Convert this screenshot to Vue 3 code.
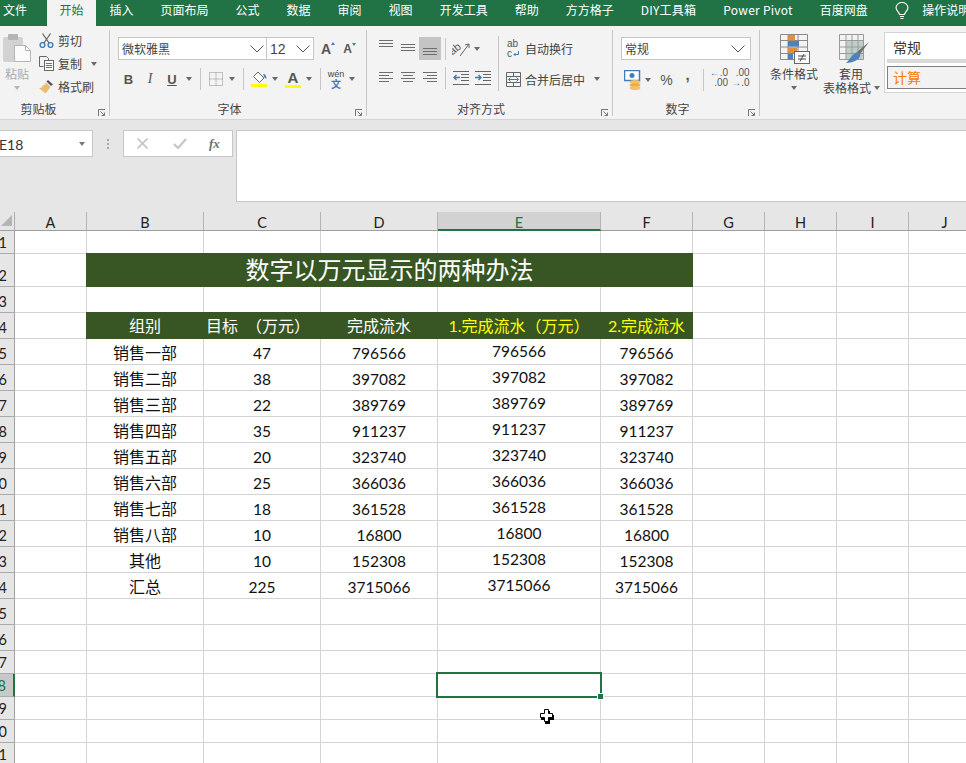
<script setup>
const tabs = ['插入', '页面布局', '公式', '数据', '审阅', '视图', '开发工具', '帮助', '方方格子', 'DIY工具箱', 'Power Pivot', '百度网盘']
const columns = ['A', 'B', 'C', 'D', 'E', 'F', 'G', 'H', 'I', 'J']

const sales = [
  ['销售一部', 47, 796566],
  ['销售二部', 38, 397082],
  ['销售三部', 22, 389769],
  ['销售四部', 35, 911237],
  ['销售五部', 20, 323740],
  ['销售六部', 25, 366036],
  ['销售七部', 18, 361528],
  ['销售八部', 10, 16800],
  ['其他', 10, 152308],
  ['汇总', 225, 3715066],
]

function blanks(count) {
  return Array.from({ length: count }, () => ({ text: '', cls: '' }))
}

function buildRow(n) {
  if (n === 2) {
    return { n, cls: 'tall', cells: [...blanks(1), { text: '数字以万元显示的两种办法', cls: 'title' }, ...blanks(4)] }
  }
  if (n === 4) {
    const heads = [
      { text: '组别', cls: 'head' },
      { text: '目标\u2002（万元）\u2002', cls: 'head' },
      { text: '完成流水', cls: 'head' },
      { text: '1.完成流水（万元）', cls: 'head gold' },
      { text: '2.完成流水', cls: 'head gold' },
    ]
    return { n, cls: '', cells: [...blanks(1), ...heads, ...blanks(4)] }
  }
  if (n >= 5 && n <= 14) {
    const [name, target, value] = sales[n - 5]
    const cells = [
      { text: name, cls: 'name' },
      { text: target, cls: 'num' },
      { text: value, cls: 'num' },
      { text: value, cls: 'num raised' },
      { text: value, cls: 'num' },
    ]
    return { n, cls: '', cells: [...blanks(1), ...cells, ...blanks(4)] }
  }
  return { n, cls: n === 1 || n >= 17 ? 'short' : '', cells: blanks(10) }
}

const rows = Array.from({ length: 21 }, (_, i) => buildRow(i + 1))
</script>

<template>
  <div class="app">
    <div class="tabs">
      <span class="tab first">文件</span>
      <span class="tab active">开始</span>
      <span v-for="t in tabs" :key="t" class="tab" :class="{ latin: /[A-Z]/.test(t) }">{{ t }}</span>
      <svg class="bulb" width="14" height="18" viewBox="0 0 14 18" fill="none" stroke="#fff" stroke-width="1.1">
        <path d="M4.5 12.5C4.5 10 1 9 1 5.8a6 5.3 0 0 1 12 0C13 9 9.500 10 9.500 12.500z" />
        <path d="M5 14.500h4M5.500 16.500h3" />
      </svg>
      <span class="tab tell">操作说明搜索</span>
    </div>

    <div class="ribbon">
      <!-- 剪贴板 -->
      <section class="group clip">
        <div class="body clip-body">
          <div class="paste">
            <svg width="28" height="28" viewBox="0 0 28 28">
              <rect x="0" y="3" width="20" height="25" rx="2" fill="#d2d2d2" />
              <rect x="5" y="0" width="10" height="6" rx="1" fill="#b5b5b5" />
              <path d="M11.500 11.500h11l5 5v11h-16z" fill="#fbfbfb" stroke="#b5b5b5" />
              <path d="M22.500 11.500v5h5" fill="none" stroke="#b5b5b5" />
            </svg>
            <span class="paste-text">粘贴</span>
            <i class="caret light"></i>
          </div>
          <div class="actions">
            <div class="action">
              <svg width="15" height="15" viewBox="0 0 15 15" fill="none">
                <path d="M3.500 0.500L10 10M11.500 0.500L5 10" stroke="#666" stroke-width="1.300" />
                <circle cx="3.500" cy="12" r="2.400" stroke="#3f7cb8" stroke-width="1.400" />
                <circle cx="11.500" cy="12" r="2.400" stroke="#3f7cb8" stroke-width="1.400" />
              </svg>
              <span>剪切</span>
            </div>
            <div class="action">
              <svg width="15" height="15" viewBox="0 0 15 15" fill="none">
                <path d="M0.500 0.500h7l2 2v2M0.500 0.500v10h4" stroke="#666" />
                <rect x="5.500" y="4.500" width="9" height="10" fill="#fff" stroke="#666" />
                <path d="M7 7.500h6M7 9.500h6M7 11.500h6" stroke="#3f7cb8" />
              </svg>
              <span>复制</span>
              <i class="caret copy-caret"></i>
            </div>
            <div class="action">
              <svg width="15" height="15" viewBox="0 0 15 15">
                <path d="M9 1l5 4.500-2 1.500-4.500-4.500z" fill="#555" />
                <path d="M7 3.500l4.500 4.500-5 6.500L0 9l3-0.500 0.500-2 2-0.500z" fill="#e8bd72" />
              </svg>
              <span>格式刷</span>
            </div>
          </div>
        </div>
        <div class="foot">
          <span class="foot-label clip-label">剪贴板</span>
          <svg class="launcher" width="7" height="7" viewBox="0 0 7 7" fill="none" stroke="#777"><path d="M0.500 7V0.500H7M2.500 2.500L6.500 6.500M3.500 6.500h3v-3" /></svg>
        </div>
      </section>
      <div class="gsep"></div>

      <!-- 字体 -->
      <section class="group font">
        <div class="body">
          <div class="font-row1">
            <div class="combo font-name">
              <span>微软雅黑</span>
              <svg class="chev" width="14" height="8" viewBox="0 0 14 8" fill="none" stroke="#555"><path d="M0.500 0.500L7 7l6.500-6.500" /></svg>
            </div>
            <div class="combo font-size">
              <span class="size-num">12</span>
              <svg class="chev" width="14" height="8" viewBox="0 0 14 8" fill="none" stroke="#555"><path d="M0.500 0.500L7 7l6.500-6.500" /></svg>
            </div>
            <span class="grow-a big">A<i class="up"></i></span>
            <span class="grow-a small">A<i class="down"></i></span>
          </div>
          <div class="font-row2">
            <b class="glyph">B</b>
            <em class="glyph ital">I</em>
            <u class="glyph">U</u>
            <i class="caret"></i>
            <i class="vsep"></i>
            <svg width="14" height="14" viewBox="0 0 14 14" fill="none" stroke="#8c8c8c" stroke-dasharray="1 1">
              <path d="M0.500 0.500h13v13h-13zM7 0.500v13M0.500 7h13" />
            </svg>
            <i class="caret"></i>
            <i class="vsep"></i>
            <span class="color-btn">
              <svg width="16" height="13" viewBox="0 0 16 13">
                <path d="M7 1l6 6-4.500 4.500L2.500 5.500z" fill="#fff" stroke="#666" />
                <path d="M12 3c2.500 0 3.500 2 3.500 5l-2-1.500z" fill="#3f7cb8" />
              </svg>
              <i class="bar"></i>
            </span>
            <i class="caret"></i>
            <span class="color-btn">
              <span class="color-a">A</span>
              <i class="bar"></i>
            </span>
            <i class="caret"></i>
            <i class="vsep"></i>
            <span class="wen"><span>wén</span><span class="wen-zi">文</span></span>
            <i class="caret"></i>
          </div>
        </div>
        <div class="foot shifted">
          <span class="foot-label">字体</span>
          <svg class="launcher" width="7" height="7" viewBox="0 0 7 7" fill="none" stroke="#777"><path d="M0.500 7V0.500H7M2.500 2.500L6.500 6.500M3.500 6.500h3v-3" /></svg>
        </div>
      </section>
      <div class="gsep"></div>

      <!-- 对齐方式 -->
      <section class="group align">
        <div class="body">
          <div class="align-row1">
            <svg class="lines at-top" width="14" height="8" viewBox="0 0 14 8"><path d="M0 0.500h14M0 3.500h14M0 6.500h14" /></svg>
            <svg class="lines at-mid" width="14" height="8" viewBox="0 0 14 8"><path d="M0 0.500h14M0 3.500h14M0 6.500h14" /></svg>
            <span class="picked"><svg class="lines" width="14" height="8" viewBox="0 0 14 8"><path d="M0 0.500h14M0 3.500h14M0 6.500h14" /></svg></span>
            <i class="vsep"></i>
            <svg width="18" height="16" viewBox="0 0 18 16" fill="none">
              <text x="0" y="14" font-size="11" font-family="Liberation Sans" fill="#555" transform="rotate(-38 1 14)">ab</text>
              <path d="M8 15L17 3M17 3l-4 1M17 3v4" stroke="#666" />
            </svg>
            <i class="caret"></i>
            <i class="vsep long-sep"></i>
            <span class="wrap-btn">
              <span class="wrap-icon">ab<br />c<svg width="6" height="6" viewBox="0 0 6 6" fill="none" stroke="#3f7cb8"><path d="M5.500 0v3.500H1M2.500 2L1 3.500 2.500 5" /></svg></span>
              自动换行
            </span>
          </div>
          <div class="align-row2">
            <svg class="lines" width="14" height="12" viewBox="0 0 14 12"><path d="M0 0.500h14M0 3.500h10M0 6.500h14M0 9.500h10" /></svg>
            <svg class="lines" width="14" height="12" viewBox="0 0 14 12"><path d="M0 0.500h14M2 3.500h10M0 6.500h14M2 9.500h10" /></svg>
            <svg class="lines" width="14" height="12" viewBox="0 0 14 12"><path d="M0 0.500h14M4 3.500h10M0 6.500h14M4 9.500h10" /></svg>
            <i class="vsep"></i>
            <svg width="16" height="14" viewBox="0 0 16 14" fill="none">
              <path d="M0 0.500h16M8 3.500h8M8 6.500h8M8 9.500h8M0 13.500h16" stroke="#666" />
              <path d="M7 6.500H1M3.500 4L1 6.500 3.500 9" stroke="#3f7cb8" stroke-width="1.500" />
            </svg>
            <svg width="16" height="14" viewBox="0 0 16 14" fill="none">
              <path d="M0 0.500h16M8 3.500h8M8 6.500h8M8 9.500h8M0 13.500h16" stroke="#666" />
              <path d="M0 6.500h6M3.500 4L6 6.500 3.500 9" stroke="#3f7cb8" stroke-width="1.500" />
            </svg>
            <span></span>
            <span class="wrap-btn merge">
              <svg width="15" height="15" viewBox="0 0 15 15" fill="none">
                <path d="M0.500 0.500h14v14h-14zM0.500 4.500h14M0.500 10.500h14M7.500 0.500v4M7.500 10.500v4" stroke="#666" />
                <path d="M2.500 7.500h10M4.500 5.500l-2 2 2 2M10.500 5.500l2 2-2 2" stroke="#3f7cb8" />
              </svg>
              <span class="merge-text">合并后居中</span>
              <i class="caret merge-caret"></i>
            </span>
          </div>
        </div>
        <div class="foot shifted">
          <span class="foot-label">对齐方式</span>
          <svg class="launcher" width="7" height="7" viewBox="0 0 7 7" fill="none" stroke="#777"><path d="M0.500 7V0.500H7M2.500 2.500L6.500 6.500M3.500 6.500h3v-3" /></svg>
        </div>
      </section>
      <div class="gsep"></div>

      <!-- 数字 -->
      <section class="group number">
        <div class="body">
          <div class="combo num-format">
            <span>常规</span>
            <svg class="chev" width="14" height="8" viewBox="0 0 14 8" fill="none" stroke="#555"><path d="M0.500 0.500L7 7l6.500-6.500" /></svg>
          </div>
          <div class="num-row">
            <svg width="17" height="20" viewBox="0 0 17 20">
              <rect x="0.500" y="0.500" width="15" height="10" fill="#fff" stroke="#3f7cb8" stroke-width="1.500" />
              <circle cx="8" cy="5.500" r="2.500" fill="#3f7cb8" />
              <ellipse cx="11" cy="12" rx="5.500" ry="2" fill="#f2c26a" />
              <ellipse cx="11" cy="15" rx="5.500" ry="2" fill="#eeae45" />
              <ellipse cx="11" cy="18" rx="5.500" ry="2" fill="#f2c26a" />
            </svg>
            <i class="caret"></i>
            <span class="pct">%</span>
            <span class="comma">,</span>
            <i class="vsep"></i>
            <span class="dec"><span><b class="arr">←</b>.0</span><span>.00</span></span>
            <span class="dec"><span>.00</span><span><b class="arr">→</b>.0</span></span>
          </div>
        </div>
        <div class="foot shifted">
          <span class="foot-label">数字</span>
          <svg class="launcher" width="7" height="7" viewBox="0 0 7 7" fill="none" stroke="#777"><path d="M0.500 7V0.500H7M2.500 2.500L6.500 6.500M3.500 6.500h3v-3" /></svg>
        </div>
      </section>
      <div class="gsep"></div>

      <!-- 样式 -->
      <section class="styles">
        <div class="big-btn cond">
          <svg class="cond-icon" width="30" height="30" viewBox="0 0 30 30" fill="none">
            <path d="M0.500 0.500h27v25h-27zM0.500 6.500h27M0.500 13h27M0.500 19.500h27M8 0.500v25M18 0.500v25" stroke="#8a8a8a" />
            <rect x="8" y="1" width="7" height="5.500" fill="#e08f3f" />
            <rect x="8" y="7" width="11" height="5.500" fill="#4f81bd" />
            <rect x="8" y="13.500" width="9" height="5.500" fill="#e08f3f" />
            <rect x="8" y="20" width="5" height="5.500" fill="#4f81bd" />
            <rect x="14.500" y="17.500" width="15" height="12" fill="#fff" stroke="#666" />
            <path d="M18 22h8M18 25h8M24 20l-4 7.500" stroke="#444" />
          </svg>
          <span class="big-text">条件格式</span>
          <i class="caret big-caret"></i>
        </div>
        <div class="big-btn table">
          <svg class="table-icon" width="30" height="30" viewBox="0 0 30 30" fill="none">
            <rect x="7" y="6" width="17" height="20" fill="#bcd0c8" />
            <path d="M0.500 0.500h24v25h-24zM0.500 6.500h24M0.500 13h24M0.500 19.500h24M7 0.500v25M13 0.500v25M19 0.500v25" stroke="#9a9a9a" />
            <path d="M30 8L21 20l-3-2z" fill="#6e6e6e" />
            <path d="M18 18l3.500 2.500C21 25 15 29 7 29c3-2 4-7 11-11z" fill="#4f81bd" />
          </svg>
          <span class="big-text">套用</span>
          <span class="big-text second">表格格式<i class="caret table-caret"></i></span>
        </div>
        <div class="gallery">
          <div class="style-normal">常规</div>
          <div class="style-calc">计算</div>
        </div>
      </section>
    </div>

    <div class="formula-bar">
      <div class="name-box">
        <span>E18</span>
        <i class="caret name-caret"></i>
      </div>
      <div class="grip"><i></i><i></i><i></i></div>
      <div class="fx-box">
        <svg width="11" height="11" viewBox="0 0 11 11" fill="none" stroke="#c6c6c6" stroke-width="1.600"><path d="M0.500 0.500l10 10M10.500 0.500l-10 10" /></svg>
        <svg width="14" height="11" viewBox="0 0 14 11" fill="none" stroke="#c6c6c6" stroke-width="2.200"><path d="M1 6l4 4 8-9" /></svg>
        <span class="fx">fx</span>
      </div>
      <div class="formula-input"></div>
    </div>

    <div class="sheet">
      <div class="col-heads">
        <div class="corner"><svg width="11" height="11" viewBox="0 0 11 11"><path d="M11 0v11H0z" fill="#b4b4b4" /></svg></div>
        <div v-for="c in columns" :key="c" class="col-head" :class="{ active: c === 'E' }">{{ c }}</div>
      </div>
      <div v-for="r in rows" :key="r.n" class="row" :class="r.cls">
        <div class="row-head" :class="{ active: r.n === 18 }">{{ r.n }}</div>
        <div v-for="(c, i) in r.cells" :key="i" class="cell" :class="c.cls">{{ c.text }}</div>
      </div>
      <div class="selection"><i class="handle"></i></div>
      <svg class="pointer" width="16" height="16" viewBox="0 0 16 16">
        <path d="M6 2h5v4h4v5h-4v4H6v-4H2V6h4z" fill="#000" />
        <path d="M5.500 0.500h4v4h4v4h-4v4h-4v-4h-4v-4h4z" fill="#fff" stroke="#000" />
      </svg>
    </div>
  </div>
</template>

<style scoped>
.app {
  position: relative;
  width: 966px;
  height: 763px;
  overflow: hidden;
  background: #fff;
  font-family: "Noto Sans CJK SC", "Liberation Sans", sans-serif;
  font-size: 12px;
  color: #444;
  text-spacing-trim: space-all;
}
i { font-style: normal; display: block; }

/* tabs */
.tabs {
  display: flex;
  align-items: flex-start;
  height: 26px;
  background: #217346;
  color: #fff;
  white-space: nowrap;
}
.tab {
  padding: 0 13.5px;
  height: 26px;
  line-height: 20px;
  flex: none;
}
.tab.first { padding: 0 20px 0 3px; }
.tab.active { background: #f3f3f3; color: #217346; padding: 0 12.5px; }
.tab.latin { letter-spacing: 0.25px; }
.bulb { margin: 2px 0 0 14px; flex: none; }
.tab.tell { padding-left: 13px; }

/* ribbon */
.ribbon {
  display: flex;
  height: 94px;
  background: #f3f3f3;
  border-bottom: 1px solid #d4d4d4;
  box-sizing: border-box;
}
.group { display: flex; flex-direction: column; flex: none; }
.gsep { width: 1px; height: 86px; margin-top: 4px; background: #c6c6c6; flex: none; }
.clip { width: 109px; }
.font { width: 256px; }
.align { width: 245px; }
.number { width: 146px; }
.body { height: 76px; flex: none; }
.foot { display: flex; height: 14px; align-items: center; line-height: 14px; }
.foot.shifted { margin-left: -8px; }
.foot-label { flex: 1; text-align: center; }
.clip-label { padding-right: 15px; }
.launcher { flex: none; margin: 6px 4px 0 6px; }

.caret {
  width: 0;
  height: 0;
  border-left: 3.5px solid transparent;
  border-right: 3.5px solid transparent;
  border-top: 4px solid #6a6a6a;
}
.caret.light { border-top-color: #b5b5b5; }
.vsep { width: 1px; height: 22px; background: #c6c6c6; }
.chev { margin-left: auto; flex: none; }

/* clipboard */
.clip-body { display: flex; }
.paste {
  display: flex;
  flex-direction: column;
  align-items: center;
  width: 28px;
  margin: 8px 0 0 3px;
}
.paste-text { color: #aaa; margin-top: 5px; line-height: 14px; }
.paste .caret { margin-top: 5px; }
.actions { margin: 3px 0 0 8px; }
.action { display: flex; align-items: center; height: 23px; white-space: nowrap; }
.action span { margin-left: 4px; }
.copy-caret { margin-left: 9px; }

/* font */
.font { padding-left: 8px; box-sizing: border-box; }
.font-row1 { display: flex; align-items: center; margin-top: 11px; height: 23px; }
.combo {
  display: flex;
  align-items: center;
  height: 23px;
  box-sizing: border-box;
  background: #fff;
  border: 1px solid #c6c6c6;
  padding: 0 3px;
}
.font-name { width: 149px; padding-right: 2px; }
.font-size { width: 47px; margin-left: 0; border-left: 0; }
.size-num { font-family: "Liberation Sans", sans-serif; font-size: 14px; }
.grow-a {
  position: relative;
  font-family: "Liberation Sans", sans-serif;
  color: #555;
  font-weight: 700;
  flex: none;
}
.grow-a.big { font-size: 14px; margin-left: 7px; }
.grow-a.small { font-size: 12px; margin-left: 12px; }
.grow-a .up, .grow-a .down {
  position: absolute;
  top: 1px;
  right: -4px;
  border-left: 2.5px solid transparent;
  border-right: 2.500px solid transparent;
}
.grow-a .up { border-bottom: 3px solid #3f7cb8; }
.grow-a .down { border-top: 3px solid #3f7cb8; }
.font-row2 {
  display: grid;
  grid-template-columns: 21px 22px 22px 12px 10px 21px 12px 10px 22px 10px 26px 6px 16px 16px 16px;
  justify-items: center;
  align-items: center;
  height: 22px;
  margin-top: 8px;
}
.glyph { font: 700 13px "Liberation Sans", sans-serif; color: #555; }
.glyph.ital { font: italic 400 14px "Liberation Serif", serif; }
.color-btn { display: flex; flex-direction: column; align-items: center; width: 16px; }
.bar { width: 16px; height: 3px; background: #ffff00; margin-top: 0; }
.color-a { font: 700 15px/14px "Liberation Sans", sans-serif; color: #555; }
.wen {
  display: flex;
  flex-direction: column;
  align-items: center;
  font: 9px/10px "Liberation Sans", sans-serif;
  white-space: nowrap;
}
.wen-zi { color: #3f7cb8; font: 700 10px/10px "Noto Sans CJK SC", sans-serif; }

/* alignment */
.align { padding-left: 8px; box-sizing: border-box; }
.lines { fill: none; stroke: #6d6d6d; }
.lines.at-top { margin-bottom: 10px; }
.lines.at-mid { margin-bottom: 2px; }
.align-row1, .align-row2 { display: grid; justify-items: center; align-items: center; }
.align-row1 {
  grid-template-columns: 22px 22px 22px 8px 24px 8px 34px auto;
  grid-template-rows: 23px;
  height: 23px;
  margin-top: 11px;
}
.align-row2 {
  grid-template-columns: 22px 22px 22px 8px 23px 22px 8px auto;
  grid-template-rows: 22px;
  height: 22px;
  margin-top: 7px;
}
.picked {
  display: flex;
  justify-content: center;
  align-items: flex-end;
  width: 22px;
  height: 23px;
  padding-bottom: 4px;
  box-sizing: border-box;
  background: #c4c4c4;
}
.long-sep { height: 55px; align-self: start; margin-top: -1px; }
.wrap-btn { display: flex; align-items: center; white-space: nowrap; justify-self: start; margin-left: -8px; font-size: 12px; }
.wrap-icon {
  width: 18px;
  font: 10px/10px "Liberation Sans", sans-serif;
  color: #555;
}
.wrap-icon svg { margin-left: 1px; }
.merge { margin-left: 4px; margin-top: 2px; }
.merge-text { margin-left: 4px; }
.merge-caret { margin-left: 9px; }

/* number */
.number { padding-left: 8px; box-sizing: border-box; }
.num-format { width: 130px; margin-top: 11px; padding-right: 5px; }
.num-row {
  display: grid;
  grid-template-columns: 22px 10px 27px 15px 16px 16px 27px;
  justify-items: center;
  align-items: center;
  height: 22px;
  margin-top: 9px;
}
.pct { font: 14px "Liberation Sans", sans-serif; color: #555; }
.comma { font: 700 15px/10px "Liberation Sans", sans-serif; color: #555; margin-top: -10px; }
.dec {
  display: flex;
  flex-direction: column;
  align-items: flex-end;
  font: 10px/10px "Liberation Sans", sans-serif;
  color: #555;
  margin-top: -4px;
}
.arr { color: #3f7cb8; font-weight: 700; }

/* styles */
.styles { display: flex; flex: 1; min-width: 0; }
.big-btn {
  display: flex;
  flex-direction: column;
  align-items: center;
  flex: none;
  padding-top: 8px;
  box-sizing: border-box;
}
.big-btn.cond { width: 58px; margin-left: 5px; }
.big-btn.table { width: 56px; }
.cond-icon { margin-left: 2px; }
.table-icon { margin-left: 5px; }
.big-text { line-height: 14px; margin-top: 3px; white-space: nowrap; }
.big-caret { margin-top: 5px; }
.second { display: flex; align-items: center; align-self: flex-start; margin-top: 0; }
.table-caret { margin-left: 3px; }
.gallery {
  flex: none;
  width: 100px;
  height: 61px;
  margin: 6px 0 0 5px;
  padding: 3px 0 0 2px;
  box-sizing: border-box;
  background: #fff;
  border: 1px solid #d4d4d4;
}
.style-normal {
  height: 23px;
  line-height: 23px;
  padding-left: 6px;
  font-size: 14px;
  color: #333;
  background: #fff;
  box-shadow: 0 4px 0 #d9d9d9;
}
.style-calc {
  height: 23px;
  line-height: 20px;
  margin-top: 7px;
  padding-left: 5px;
  box-sizing: border-box;
  font-size: 14px;
  color: #fa7d00;
  background: #f2f2f2;
  border: 1px solid #7f7f7f;
}

/* formula bar */
.formula-bar {
  display: flex;
  align-items: flex-start;
  height: 92px;
  padding-top: 10px;
  box-sizing: border-box;
  background: #e6e6e6;
}
.name-box, .fx-box {
  display: flex;
  align-items: center;
  height: 27px;
  box-sizing: border-box;
  background: #fff;
  border: 1px solid #c6c6c6;
  flex: none;
}
.name-box { width: 94px; margin-left: -1px; border-left: 0; }
.name-box span { font: 14px "Lato", "Liberation Sans", sans-serif; color: #333; margin: 2px 0 0 0; }
.name-caret { margin-left: auto; margin-right: 7px; border-top-color: #777; }
.grip { display: flex; flex-direction: column; gap: 2px; margin: 9px 14px 0 14px; flex: none; }
.grip i { width: 2px; height: 2px; background: #a8a8a8; }
.fx-box { width: 110px; padding-left: 13px; }
.fx-box svg + svg { margin-left: 25px; }
.fx {
  margin-left: 22px;
  font: italic 700 13px "Liberation Serif", serif;
  color: #6f6f6f;
}
.formula-input {
  flex: 1;
  height: 72px;
  margin-left: 3px;
  box-sizing: border-box;
  background: #fff;
  border: 1px solid #c6c6c6;
  border-right: 0;
}

/* sheet */
.sheet { position: relative; }
.col-heads, .row {
  display: grid;
  grid-template-columns: 15px 72px 117px 117px 117px 163px 92px 72px 72px 72px 72px;
}
.col-heads { height: 19px; background: #e6e6e6; }
.corner {
  display: flex;
  align-items: flex-end;
  padding: 0 0 4px 1px;
  box-sizing: border-box;
  border-right: 1px solid #ababab;
  border-bottom: 1px solid #9f9f9f;
}
.col-head {
  text-align: center;
  font: 14.500px/21px "Lato", "Liberation Sans", sans-serif;
  color: #222;
  border-right: 1px solid #b4b4b4;
  border-bottom: 1px solid #9f9f9f;
  box-sizing: border-box;
  overflow: hidden;
}
.col-head.active {
  background: #d2d2d2;
  color: #217346;
  border-bottom: 2px solid #217346;
}
.row { height: 26px; grid-template-rows: 26px; }
.row.short { height: 23px; grid-template-rows: 23px; }
.row.tall { height: 33px; grid-template-rows: 33px; }
.row-head {
  display: flex;
  justify-content: flex-end;
  align-items: flex-end;
  overflow: hidden;
  padding-right: 7px;
  background: #e6e6e6;
  border-right: 1px solid #9f9f9f;
  border-bottom: 1px solid #ababab;
  box-sizing: border-box;
  font: 14.500px/20px "Lato", "Liberation Sans", sans-serif;
  color: #222;
}
.row-head.active {
  background: #c8c8c8;
  color: #217346;
  border-right: 2px solid #217346;
}
.cell {
  display: flex;
  align-items: center;
  justify-content: center;
  white-space: nowrap;
  border-right: 1px solid #d4d4d4;
  border-bottom: 1px solid #d4d4d4;
  box-sizing: border-box;
  font-family: "Lato", "Noto Sans CJK SC", sans-serif;
  font-size: 16px;
  color: #111;
}
.cell.name { font-family: "Noto Sans CJK SC", sans-serif; }
.cell.num { padding-top: 2px; font-size: 15.5px; }
.cell.raised { padding: 0 0 2px; }
.cell.title, .cell.head {
  position: relative;
  margin: -1px 0 0 -1px;
  border: 0;
  background: #375623;
  color: #fff;
}
.cell.title {
  grid-column: span 5;
  padding-bottom: 3px;
  line-height: 28px;
  font-size: 24px;
  font-family: "Noto Sans CJK SC", sans-serif;
}
.cell.head { padding-bottom: 2px; font-family: "Noto Sans CJK SC", sans-serif; }
.cell.gold { color: #ffff00; font-family: "Lato", "Noto Sans CJK SC", sans-serif; }

.selection {
  position: absolute;
  left: 436px;
  top: 460px;
  width: 166px;
  height: 26px;
  border: 2px solid #217346;
  box-sizing: border-box;
}
.handle {
  position: absolute;
  right: -3px;
  bottom: -3px;
  width: 5px;
  height: 5px;
  background: #217346;
  outline: 1px solid #fff;
}
.pointer { position: absolute; left: 539px; top: 497px; }
</style>

<style>
html, body { margin: 0; overflow: hidden; background: #fff; }
</style>
